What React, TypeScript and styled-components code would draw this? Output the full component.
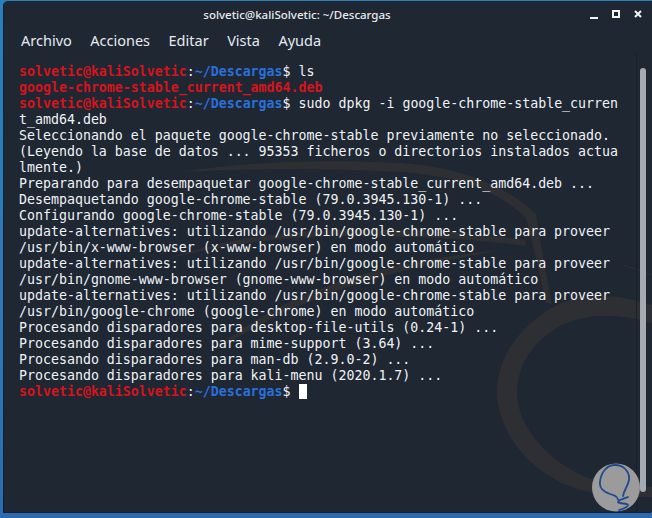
import styled, { createGlobalStyle } from "styled-components";

const GlobalStyle = createGlobalStyle`
  html, body {
    margin: 0;
    padding: 0;
    background: #2a78b8;
  }
`;

const Desktop = styled.div`
  width: 652px;
  height: 518px;
  overflow: hidden;
  position: relative;
  box-sizing: border-box;
  padding: 1px 0 6px 4px;
  background: linear-gradient(180deg, #2b7fbd 0%, #2a78b8 70%, #2a6bb4 100%);
`;

const Window = styled.div`
  position: relative;
  height: 100%;
  display: flex;
  flex-direction: column;
  background: #1f2733;
  border-radius: 4px 0 0 0;
  box-shadow: -1px 1px 0 #16202c;
  overflow: hidden;
`;

const Watermark = styled.svg`
  position: absolute;
  left: -4px;
  top: -1px;
  width: 652px;
  height: 518px;
  pointer-events: none;
`;

const TitleBar = styled.div`
  position: relative;
  height: 27px;
  flex: none;
  display: flex;
  align-items: center;
  justify-content: center;
  padding-right: 62px;
  color: #e6eaef;
  font: 500 11.5px "Noto Sans", sans-serif;
`;

const Controls = styled.svg`
  position: absolute;
  right: 4px;
  top: 5px;
  width: 60px;
  height: 16px;
`;

const MenuBar = styled.div`
  position: relative;
  flex: none;
  height: 24px;
  display: flex;
  align-items: center;
  gap: 18.5px;
  padding-left: 17px;
  color: #e6eaef;
  font: 14.5px "Noto Sans", sans-serif;
`;

const Body = styled.div`
  position: relative;
  flex: 1;
  min-height: 0;
  display: flex;
`;

const Terminal = styled.div`
  flex: 1;
  padding: 12px 0 0 15px;
  color: #f0f3f6;
  font: 500 13.28px/16px "DejaVu Sans Mono", monospace;
  white-space: pre;
`;

const Row = styled.div`
  height: 16px;
`;

const Red = styled.span`
  color: #d5141c;
  font-weight: 700;
`;

const Blue = styled.span`
  color: #2a70dc;
  font-weight: 700;
`;

const Cursor = styled.span`
  display: inline-block;
  width: 8px;
  height: 15px;
  margin-left: 8px;
  vertical-align: -3px;
  background: #ffffff;
`;

const ScrollTrack = styled.div`
  flex: none;
  width: 16px;
  padding: 16px 6px 20px 3px;
  box-sizing: border-box;
  border-left: 1px solid #18202a;
  display: flex;
`;

const ScrollThumb = styled.div`
  width: 6px;
  border-radius: 3px;
  background: #a6abb3;
`;

const Logo = styled.svg`
  position: absolute;
  left: 592px;
  top: 463px;
  width: 48px;
  height: 50px;
`;

const Prompt = () => (
  <>
    <Red>solvetic@kaliSolvetic</Red>:<Blue>~/Descargas</Blue>$
  </>
);

const output = [
  "Seleccionando el paquete google-chrome-stable previamente no seleccionado.",
  "(Leyendo la base de datos ... 95353 ficheros o directorios instalados actua",
  "lmente.)",
  "Preparando para desempaquetar google-chrome-stable_current_amd64.deb ...",
  "Desempaquetando google-chrome-stable (79.0.3945.130-1) ...",
  "Configurando google-chrome-stable (79.0.3945.130-1) ...",
  "update-alternatives: utilizando /usr/bin/google-chrome-stable para proveer",
  "/usr/bin/x-www-browser (x-www-browser) en modo automático",
  "update-alternatives: utilizando /usr/bin/google-chrome-stable para proveer",
  "/usr/bin/gnome-www-browser (gnome-www-browser) en modo automático",
  "update-alternatives: utilizando /usr/bin/google-chrome-stable para proveer",
  "/usr/bin/google-chrome (google-chrome) en modo automático",
  "Procesando disparadores para desktop-file-utils (0.24-1) ...",
  "Procesando disparadores para mime-support (3.64) ...",
  "Procesando disparadores para man-db (2.9.0-2) ...",
  "Procesando disparadores para kali-menu (2020.1.7) ...",
];

function App() {
  return (
    <Desktop>
      <GlobalStyle />
      <Window>
        <Watermark viewBox="0 0 652 518">
          <g fill="#2e2f32">
            <path d="M180 172 C260 160 330 160 400 163 C460 167 505 185 536 214 C540 240 546 275 552 304 L546 303 C540 275 533 245 526 218 C500 192 460 176 400 172 C330 168 260 168 180 172 Z" />
            <path d="M166 259 C220 240 270 233 330 230 C400 228 470 232 525 240 L526 246 C470 238 400 236 330 236 C270 238 220 246 166 259 Z" />
            <path d="M213 352 C245 322 300 292 370 272 C420 260 460 254 500 250 C450 260 410 268 370 280 C310 298 255 325 213 352 Z" />
            <path d="M652 305 C610 292 575 292 545 312 C515 332 497 362 497 392 C498 430 525 465 560 482 C585 494 610 497 652 497 L652 487 C610 487 585 480 562 464 C535 445 517 418 517 392 C518 362 535 340 560 326 C590 312 620 314 652 323 Z" />
          </g>
          <path d="M624 265 L652 275" stroke="#2e2f32" strokeWidth="1.2" />
        </Watermark>
        <TitleBar>
          solvetic@kaliSolvetic: ~/Descargas
          <Controls viewBox="0 0 60 16">
            <path d="M2 12 H10" stroke="#f2f4f6" strokeWidth="2" />
            <rect x="25" y="5" width="6" height="6" fill="none" stroke="#f2f4f6" strokeWidth="2" />
            <path d="M47 5 L53 11 M53 5 L47 11" stroke="#f2f4f6" strokeWidth="2" />
          </Controls>
        </TitleBar>
        <MenuBar>
          <span>Archivo</span>
          <span>Acciones</span>
          <span>Editar</span>
          <span>Vista</span>
          <span>Ayuda</span>
        </MenuBar>
        <Body>
          <Terminal>
            <Row>
              <Prompt /> ls
            </Row>
            <Row>
              <Red>google-chrome-stable_current_amd64.deb</Red>
            </Row>
            <Row>
              <Prompt /> sudo dpkg -i google-chrome-stable_curren
            </Row>
            <Row>t_amd64.deb</Row>
            {output.map((line) => (
              <Row key={line}>{line}</Row>
            ))}
            <Row>
              <Prompt />
              <Cursor />
            </Row>
          </Terminal>
          <ScrollTrack>
            <ScrollThumb />
          </ScrollTrack>
        </Body>
      </Window>
      <Logo viewBox="0 0 48 50">
        <circle cx="24" cy="24.5" r="24" fill="#9b9b9b" />
        <path
          d="M27 38 C25 33 22 32 18 31 C12 29 7 26 8 19 C9 9 15 2 23 2 C32 2 38 9 37 17 C36 23 32 27 31 33 M36 34 C31 36 26 37 26 39 C27 41 36 40 36 42 C35 45 30 46 27 47"
          fill="none"
          stroke="#1f4b8e"
          strokeWidth="1.8"
          strokeLinecap="round"
        />
      </Logo>
    </Desktop>
  );
}

export default App;
